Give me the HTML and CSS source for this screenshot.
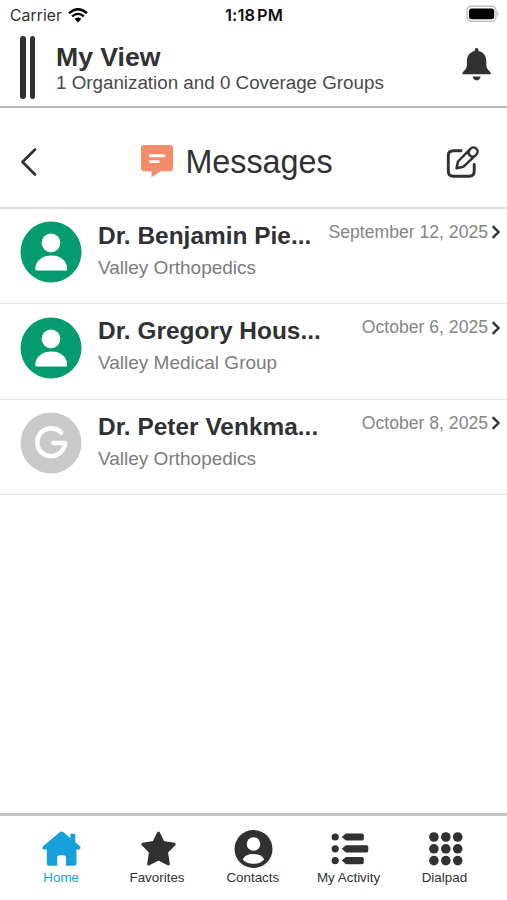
FILE: index.html
```html
<!DOCTYPE html>
<html lang="en">
<head>
<meta charset="utf-8">
<title>Messages</title>
<link rel="stylesheet" href="styles.css">
</head>
<body>
<div class="status">
  <div class="carrier"><span>Carrier</span>
    <svg width="20" height="15" viewBox="0 0 20 15"><g fill="none" stroke="#000" stroke-width="2.3"><path d="M1 5.1Q10-2.7 19 5.1"/><path d="M4.1 8.4Q10 3.3 15.9 8.4"/></g><path d="M6.7 11Q10 8.2 13.3 11L10 14.5Z"/></svg>
  </div>
  <span class="time">1:18<span class="pm">PM</span></span>
  <svg class="battery" width="34" height="18" viewBox="0 0 34 18"><rect x="1" y="1.1" width="29" height="15.2" rx="4.5" fill="#fff" stroke="#b5b5b5" stroke-width="1.2"/><rect x="3" y="3.4" width="25.2" height="10.8" rx="2.5"/><path d="M31.4 6.2Q33.8 8.6 31.4 11Z" fill="#b5b5b5"/></svg>
</div>
<header class="header">
  <div class="bars"><i></i><i></i></div>
  <div class="view"><h1>My View</h1><p>1 Organization and 0 Coverage Groups</p></div>
  <svg class="bell" width="30" height="34" viewBox="0 0 30 34" fill="#303133"><path d="M12.7 3V1.9a1.9 1.9 0 0 1 3.8 0V3C22 4 24.3 8.7 24.3 13V17Q24.3 20.5 27.8 23.5Q29.2 25 28.7 26.2H.5Q0 25 1.4 23.5Q4.9 20.5 4.9 17V13C4.9 8.7 7.2 4 12.7 3Z"/><path d="M10.6 28.6H18.6Q18 32.4 14.6 32.4Q11.2 32.4 10.6 28.6Z"/></svg>
</header>
<div class="titlebar">
  <svg width="18" height="30" viewBox="0 0 18 30"><path d="M15 2.5L2.5 15L15 27.5" fill="none" stroke="#303133" stroke-width="2.8" stroke-linecap="round" stroke-linejoin="round"/></svg>
  <div class="title">
    <svg width="34" height="34" viewBox="0 0 34 34"><path d="M4 1H30Q33 1 33 4V24.3Q33 27.3 30 27.3H20.5L11.5 33.2V27.3H4Q1 27.3 1 24.3V4Q1 1 4 1Z" fill="#f48b69"/><path d="M10.3 11.8H24M10.3 17.6H18.3" stroke="#fff" stroke-width="2.9" stroke-linecap="round"/></svg>
    <h2>Messages</h2>
  </div>
  <svg width="36" height="36" viewBox="0 0 36 36" fill="none" stroke="#303133" stroke-width="2.9" stroke-linecap="round" stroke-linejoin="round"><path d="M16 6.8H8.3Q3.3 6.8 3.3 11.8V27.3Q3.3 32.3 8.3 32.3H24.2Q29.2 32.3 29.2 27.3V20.5"/><path stroke-width="2.5" d="M11.5 24.3L13 17.5L25.4 4.8A4.1 4.1 0 0 1 31.5 10.4L18.5 22.7ZM24.2 6.5A4 4 0 0 0 29.7 12"/></svg>
</div>
<main>
  <section class="row">
    <svg class="avatar" width="62" height="62" viewBox="0 0 62 62"><circle cx="31" cy="31" r="30.5" fill="#049c6f"/><circle cx="31" cy="21.8" r="9.4" fill="#fff"/><path d="M16.8 49.5H46.2Q47.2 49.5 47.2 48C46.8 39 40 34.5 31.5 34.5C23 34.5 15.5 39 15.3 48Q15.3 49.5 16.8 49.5Z" fill="#fff"/></svg>
    <div class="info"><div class="line"><h3>Dr. Benjamin Pie...</h3><time>September 12, 2025</time><svg class="chev" width="9" height="14" viewBox="0 0 9 14"><path d="M1.4 1.8L6.6 7L1.4 12.2"/></svg></div><p>Valley Orthopedics</p></div>
  </section>
  <section class="row">
    <svg class="avatar" width="62" height="62" viewBox="0 0 62 62"><circle cx="31" cy="31" r="30.5" fill="#049c6f"/><circle cx="31" cy="21.8" r="9.4" fill="#fff"/><path d="M16.8 49.5H46.2Q47.2 49.5 47.2 48C46.8 39 40 34.5 31.5 34.5C23 34.5 15.5 39 15.3 48Q15.3 49.5 16.8 49.5Z" fill="#fff"/></svg>
    <div class="info"><div class="line"><h3>Dr. Gregory Hous...</h3><time>October 6, 2025</time><svg class="chev" width="9" height="14" viewBox="0 0 9 14"><path d="M1.4 1.8L6.6 7L1.4 12.2"/></svg></div><p>Valley Medical Group</p></div>
  </section>
  <section class="row">
    <svg class="avatar" width="62" height="62" viewBox="0 0 62 62"><circle cx="31" cy="31" r="30.5" fill="#c9c9c9"/><path d="M41.2 20.7A13.9 13.9 0 1 0 45 31H33.5" fill="none" stroke="#fff" stroke-width="4.6" stroke-linecap="round" stroke-linejoin="round"/></svg>
    <div class="info"><div class="line"><h3>Dr. Peter Venkma...</h3><time>October 8, 2025</time><svg class="chev" width="9" height="14" viewBox="0 0 9 14"><path d="M1.4 1.8L6.6 7L1.4 12.2"/></svg></div><p>Valley Orthopedics</p></div>
  </section>
</main>
<nav class="tabs">
  <a class="active"><svg width="40" height="40" viewBox="0 0 40 40"><path d="M17.6 3.2Q19.5 1.6 21.4 3.2L28.3 9V4.8H33.3V13.2L38.2 17.4Q39.5 20.6 36.5 20.6H34.5V34.3Q34.5 36.8 32 36.8H24V29Q24 26.3 21.5 26.3H17.7Q15.2 26.3 15.2 29V36.8H7.3Q4.8 36.8 4.8 34.3V20.6H2.5Q-.5 20.6.8 17.4Z"/></svg><span>Home</span></a>
  <a><svg width="40" height="40" viewBox="0 0 40 40"><path stroke="#303133" stroke-width="3" stroke-linejoin="round" d="M20.5 4.1L25.2 13.6L36.2 15.3L28.5 23L30.3 35L20.5 30L10.7 35L12.5 23L4.8 15.3L15.8 13.6Z"/></svg><span>Favorites</span></a>
  <a><svg width="40" height="40" viewBox="0 0 40 40"><circle cx="20.5" cy="20" r="19"/><circle cx="20.5" cy="15" r="6.8" fill="#fff"/><path d="M9.8 30.5Q12 25 20.5 25Q29 25 31.2 30.5Q27.5 34.8 20.5 34.8Q13.5 34.8 9.8 30.5Z" fill="#fff"/></svg><span>Contacts</span></a>
  <a><svg width="40" height="40" viewBox="0 0 40 40"><circle cx="6.2" cy="8" r="3.6"/><circle cx="6.2" cy="19.8" r="3.6"/><circle cx="6.2" cy="31.6" r="3.6"/><path d="M12.7 8L17 4.4H33Q34.8 4.4 34.8 6V10Q34.8 11.6 33 11.6H17ZM12.7 19.8L17 16.2H37.5Q39.3 16.2 39.3 17.8V21.8Q39.3 23.4 37.5 23.4H17ZM12.7 31.6L17 28H33Q34.8 28 34.8 29.6V33.6Q34.8 35.2 33 35.2H17Z"/></svg><span>My Activity</span></a>
  <a><svg width="40" height="40" viewBox="0 0 40 40"><circle cx="8.9" cy="8" r="4.8"/><circle cx="20.8" cy="8" r="4.8"/><circle cx="32.7" cy="8" r="4.8"/><circle cx="8.9" cy="19.8" r="4.8"/><circle cx="20.8" cy="19.8" r="4.8"/><circle cx="32.7" cy="19.8" r="4.8"/><circle cx="8.9" cy="31.6" r="4.8"/><circle cx="20.8" cy="31.6" r="4.8"/><circle cx="32.7" cy="31.6" r="4.8"/></svg><span>Dialpad</span></a>
</nav>
</body>
</html>
```
FILE: styles.css
```css
* { box-sizing: border-box; }
body {
  margin: 0;
  height: 900px;
  display: flex;
  flex-direction: column;
  overflow: hidden;
  background: #fff;
  color: #303133;
  font-family: "Liberation Sans", Arial, sans-serif;
}
h1, h2, h3, p { margin: 0; white-space: nowrap; }
svg { display: block; flex: none; }

.status {
  height: 30px;
  display: grid;
  grid-template-columns: 1fr auto 1fr;
  align-items: center;
  padding: 0 9px 0 10px;
  font-family: Inter, sans-serif;
}
.carrier { display: flex; align-items: center; gap: 6px; font-size: 15.7px; letter-spacing: .1px; }
.time { color: #111; font-size: 16.4px; font-weight: 600; letter-spacing: .1px; }
.pm { margin-left: 2px; }
.battery { justify-self: end; margin: -2px -2px 0 0; }

.header {
  height: 78px;
  display: flex;
  padding: 5px 15px 0 20px;
  border-bottom: 2px solid #b9b9b9;
}
.bars { display: flex; gap: 4px; padding-top: 1px; }
.bars i { width: 5.5px; height: 63px; border-radius: 3px; background: #303133; }
.view { flex: 1; padding: 7px 0 0 21px; }
.view h1 { font-size: 26.6px; line-height: 30px; }
.view p { font-size: 18.8px; line-height: 22px; color: #48494b; }
.bell { margin-top: 13px; }

.titlebar {
  height: 100.5px;
  display: flex;
  align-items: center;
  justify-content: space-between;
  padding: 9px 26px 0 20px;
  border-bottom: 2px solid #dedede;
}
.title { display: flex; align-items: center; gap: 11px; margin: 1px 10px 0 0; }
.title svg { margin-top: -2px; }
.title h2 { font-size: 32.3px; font-weight: 400; line-height: 38px; }

.row {
  height: 95.6px;
  display: flex;
  align-items: flex-start;
  gap: 16px;
  padding: 12.7px 6px 0 20px;
  border-bottom: 1px solid #e6e6e6;
}
.info { flex: 1; min-width: 0; margin-top: -.5px; }
.line { display: flex; align-items: flex-start; }
.line h3 { font-size: 24.4px; line-height: 30px; letter-spacing: .03px; }
.line time { margin-left: auto; padding-top: 1px; font-size: 17.6px; line-height: 20px; color: #858585; white-space: nowrap; }
.chev { margin: 4.5px 0 0 4px; fill: none; stroke: #303133; stroke-width: 2.4; stroke-linecap: round; stroke-linejoin: round; }
.info p { padding-top: 6px; font-size: 19px; line-height: 22px; color: #7c7c7c; }

.tabs {
  margin-top: auto;
  height: 87px;
  display: grid;
  grid-template-columns: repeat(5, 95.8px);
  justify-content: center;
  padding: 13px 1.4px 0 0;
  border-top: 3px solid #c4c4c4;
}
.tabs a { display: flex; flex-direction: column; align-items: center; fill: #303133; }
.tabs svg { margin-left: 1px; }
.tabs span { margin-top: 1px; font-size: 13.4px; line-height: 16px; white-space: nowrap; }
.tabs .active { color: #18a0db; fill: #18a0db; }
```
